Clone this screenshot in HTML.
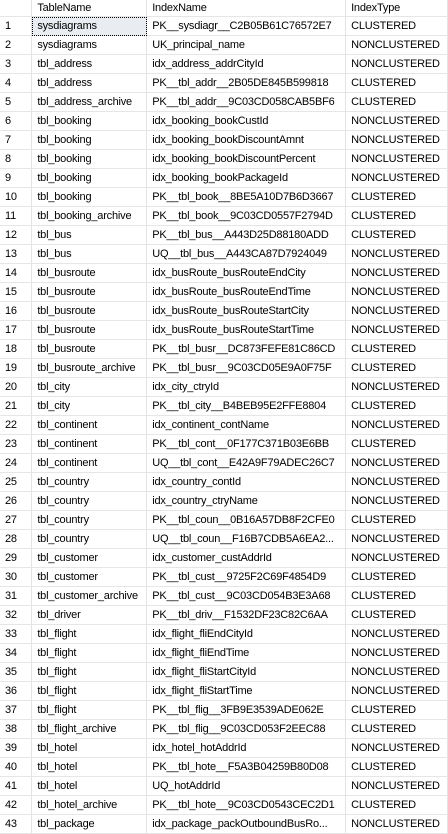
<!DOCTYPE html>
<html><head><meta charset="utf-8"><style>
html,body{margin:0;padding:0;background:#fff;width:448px;height:834px;overflow:hidden}
table{border-collapse:collapse;table-layout:fixed;font-family:"Liberation Sans",sans-serif;font-size:11px;letter-spacing:-0.2px;color:#000}
td,th{height:18px;padding:0 0 0 5px;white-space:nowrap;overflow:hidden;text-align:left;font-weight:normal;border-right:1px solid #e3e3e3;border-bottom:1px solid #e6e6e6}
th{height:16px;border-bottom:1px solid #e6e6e6}
.sel{background:#e9edf1;outline:1px dotted #000;outline-offset:-1px}
</style></head><body>
<table>
<colgroup><col style="width:32px"><col style="width:115px"><col style="width:199px"><col style="width:102px"></colgroup>
<tr><th></th><th>TableName</th><th>IndexName</th><th>IndexType</th></tr>
<tr><td>1</td><td class="sel">sysdiagrams</td><td>PK__sysdiagr__C2B05B61C76572E7</td><td>CLUSTERED</td></tr>
<tr><td>2</td><td>sysdiagrams</td><td>UK_principal_name</td><td>NONCLUSTERED</td></tr>
<tr><td>3</td><td>tbl_address</td><td>idx_address_addrCityId</td><td>NONCLUSTERED</td></tr>
<tr><td>4</td><td>tbl_address</td><td>PK__tbl_addr__2B05DE845B599818</td><td>CLUSTERED</td></tr>
<tr><td>5</td><td>tbl_address_archive</td><td>PK__tbl_addr__9C03CD058CAB5BF6</td><td>CLUSTERED</td></tr>
<tr><td>6</td><td>tbl_booking</td><td>idx_booking_bookCustId</td><td>NONCLUSTERED</td></tr>
<tr><td>7</td><td>tbl_booking</td><td>idx_booking_bookDiscountAmnt</td><td>NONCLUSTERED</td></tr>
<tr><td>8</td><td>tbl_booking</td><td>idx_booking_bookDiscountPercent</td><td>NONCLUSTERED</td></tr>
<tr><td>9</td><td>tbl_booking</td><td>idx_booking_bookPackageId</td><td>NONCLUSTERED</td></tr>
<tr><td>10</td><td>tbl_booking</td><td>PK__tbl_book__8BE5A10D7B6D3667</td><td>CLUSTERED</td></tr>
<tr><td>11</td><td>tbl_booking_archive</td><td>PK__tbl_book__9C03CD0557F2794D</td><td>CLUSTERED</td></tr>
<tr><td>12</td><td>tbl_bus</td><td>PK__tbl_bus__A443D25D88180ADD</td><td>CLUSTERED</td></tr>
<tr><td>13</td><td>tbl_bus</td><td>UQ__tbl_bus__A443CA87D7924049</td><td>NONCLUSTERED</td></tr>
<tr><td>14</td><td>tbl_busroute</td><td>idx_busRoute_busRouteEndCity</td><td>NONCLUSTERED</td></tr>
<tr><td>15</td><td>tbl_busroute</td><td>idx_busRoute_busRouteEndTime</td><td>NONCLUSTERED</td></tr>
<tr><td>16</td><td>tbl_busroute</td><td>idx_busRoute_busRouteStartCity</td><td>NONCLUSTERED</td></tr>
<tr><td>17</td><td>tbl_busroute</td><td>idx_busRoute_busRouteStartTime</td><td>NONCLUSTERED</td></tr>
<tr><td>18</td><td>tbl_busroute</td><td>PK__tbl_busr__DC873FEFE81C86CD</td><td>CLUSTERED</td></tr>
<tr><td>19</td><td>tbl_busroute_archive</td><td>PK__tbl_busr__9C03CD05E9A0F75F</td><td>CLUSTERED</td></tr>
<tr><td>20</td><td>tbl_city</td><td>idx_city_ctryId</td><td>NONCLUSTERED</td></tr>
<tr><td>21</td><td>tbl_city</td><td>PK__tbl_city__B4BEB95E2FFE8804</td><td>CLUSTERED</td></tr>
<tr><td>22</td><td>tbl_continent</td><td>idx_continent_contName</td><td>NONCLUSTERED</td></tr>
<tr><td>23</td><td>tbl_continent</td><td>PK__tbl_cont__0F177C371B03E6BB</td><td>CLUSTERED</td></tr>
<tr><td>24</td><td>tbl_continent</td><td>UQ__tbl_cont__E42A9F79ADEC26C7</td><td>NONCLUSTERED</td></tr>
<tr><td>25</td><td>tbl_country</td><td>idx_country_contId</td><td>NONCLUSTERED</td></tr>
<tr><td>26</td><td>tbl_country</td><td>idx_country_ctryName</td><td>NONCLUSTERED</td></tr>
<tr><td>27</td><td>tbl_country</td><td>PK__tbl_coun__0B16A57DB8F2CFE0</td><td>CLUSTERED</td></tr>
<tr><td>28</td><td>tbl_country</td><td>UQ__tbl_coun__F16B7CDB5A6EA2...</td><td>NONCLUSTERED</td></tr>
<tr><td>29</td><td>tbl_customer</td><td>idx_customer_custAddrId</td><td>NONCLUSTERED</td></tr>
<tr><td>30</td><td>tbl_customer</td><td>PK__tbl_cust__9725F2C69F4854D9</td><td>CLUSTERED</td></tr>
<tr><td>31</td><td>tbl_customer_archive</td><td>PK__tbl_cust__9C03CD054B3E3A68</td><td>CLUSTERED</td></tr>
<tr><td>32</td><td>tbl_driver</td><td>PK__tbl_driv__F1532DF23C82C6AA</td><td>CLUSTERED</td></tr>
<tr><td>33</td><td>tbl_flight</td><td>idx_flight_fliEndCityId</td><td>NONCLUSTERED</td></tr>
<tr><td>34</td><td>tbl_flight</td><td>idx_flight_fliEndTime</td><td>NONCLUSTERED</td></tr>
<tr><td>35</td><td>tbl_flight</td><td>idx_flight_fliStartCityId</td><td>NONCLUSTERED</td></tr>
<tr><td>36</td><td>tbl_flight</td><td>idx_flight_fliStartTime</td><td>NONCLUSTERED</td></tr>
<tr><td>37</td><td>tbl_flight</td><td>PK__tbl_flig__3FB9E3539ADE062E</td><td>CLUSTERED</td></tr>
<tr><td>38</td><td>tbl_flight_archive</td><td>PK__tbl_flig__9C03CD053F2EEC88</td><td>CLUSTERED</td></tr>
<tr><td>39</td><td>tbl_hotel</td><td>idx_hotel_hotAddrId</td><td>NONCLUSTERED</td></tr>
<tr><td>40</td><td>tbl_hotel</td><td>PK__tbl_hote__F5A3B04259B80D08</td><td>CLUSTERED</td></tr>
<tr><td>41</td><td>tbl_hotel</td><td>UQ_hotAddrId</td><td>NONCLUSTERED</td></tr>
<tr><td>42</td><td>tbl_hotel_archive</td><td>PK__tbl_hote__9C03CD0543CEC2D1</td><td>CLUSTERED</td></tr>
<tr><td>43</td><td>tbl_package</td><td>idx_package_packOutboundBusRo...</td><td>NONCLUSTERED</td></tr>
</table>
</body></html>
